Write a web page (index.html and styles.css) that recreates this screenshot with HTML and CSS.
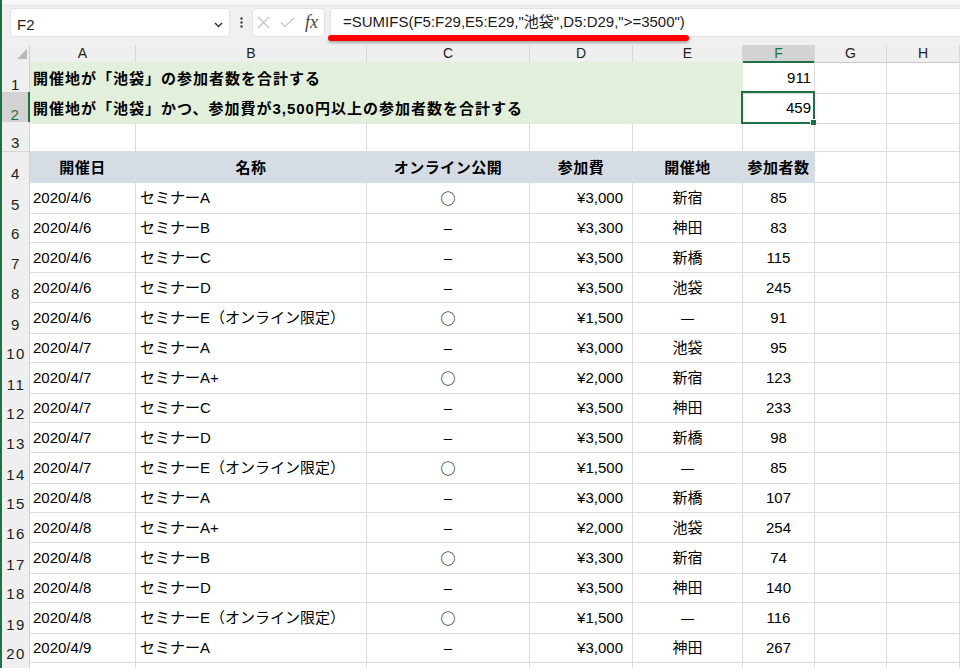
FILE: index.html
```html
<!DOCTYPE html>
<html lang="ja">
<head>
<meta charset="utf-8">
<title>SUMIFS</title>
<link rel="stylesheet" href="styles.css">
</head>
<body>
<div class="app">
  <div class="toolbar">
    <div class="namebox">
      <span class="name">F2</span>
      <svg class="chev" width="9" height="6" viewBox="0 0 9 6"><path d="M1 1l3.5 3.5L8 1" fill="none" stroke="#333" stroke-width="1.5"/></svg>
    </div>
    <div class="dots">
      <svg width="3" height="11" viewBox="0 0 3 11"><circle cx="1.5" cy="1.5" r="1.2" fill="#444"/><circle cx="1.5" cy="5.5" r="1.2" fill="#444"/><circle cx="1.5" cy="9.5" r="1.2" fill="#444"/></svg>
    </div>
    <div class="fxbox">
      <svg width="13" height="13" viewBox="0 0 13 13"><path d="M1 1L12 12M12 1L1 12" fill="none" stroke="#c2c2c2" stroke-width="1.2"/></svg>
      <svg width="15" height="11" viewBox="0 0 15 11"><path d="M1 5.5L5 9.5L14 1" fill="none" stroke="#c2c2c2" stroke-width="1.2"/></svg>
      <span class="fx">fx</span>
    </div>
    <div class="formula">
      <span class="ftext">=SUMIFS(F5:F29,E5:E29,"池袋",D5:D29,"&gt;=3500")</span>
      <div class="mark"></div>
    </div>
  </div>

  <div class="sheet">
    <div class="row hdr">
      <div class="corner"><svg width="10" height="10" viewBox="0 0 10 10"><polygon points="10,0 10,10 0,10" fill="#b9b9b9"/></svg></div>
      <div class="ch">A</div><div class="ch">B</div><div class="ch">C</div><div class="ch">D</div><div class="ch">E</div><div class="ch sel">F</div><div class="ch">G</div><div class="ch">H</div>
    </div>

    <div class="row">
      <div class="rh">1</div>
      <div class="c note">開催地が「池袋」の参加者数を合計する</div>
      <div class="c val">911</div><div class="c"></div><div class="c"></div>
    </div>
    <div class="row">
      <div class="rh sel">2</div>
      <div class="c note">開催地が「池袋」かつ、参加費が3,500円以上の参加者数を合計する</div>
      <div class="c val active">459</div><div class="c"></div><div class="c"></div>
    </div>
    <div class="row">
      <div class="rh">3</div>
      <div class="c"></div><div class="c"></div><div class="c"></div><div class="c"></div><div class="c"></div><div class="c"></div><div class="c"></div><div class="c"></div>
    </div>
    <div class="row">
      <div class="rh">4</div>
      <div class="c th">開催日</div><div class="c th">名称</div><div class="c th">オンライン公開</div><div class="c th">参加費</div><div class="c th">開催地</div><div class="c th">参加者数</div><div class="c"></div><div class="c"></div>
    </div>

    <div class="row"><div class="rh">5</div><div class="c a">2020/4/6</div><div class="c b">セミナーA</div><div class="c m"><span class="maru">○</span></div><div class="c d">¥3,000</div><div class="c e">新宿</div><div class="c n">85</div><div class="c"></div><div class="c"></div></div>
    <div class="row"><div class="rh">6</div><div class="c a">2020/4/6</div><div class="c b">セミナーB</div><div class="c m">–</div><div class="c d">¥3,300</div><div class="c e">神田</div><div class="c n">83</div><div class="c"></div><div class="c"></div></div>
    <div class="row"><div class="rh">7</div><div class="c a">2020/4/6</div><div class="c b">セミナーC</div><div class="c m">–</div><div class="c d">¥3,500</div><div class="c e">新橋</div><div class="c n">115</div><div class="c"></div><div class="c"></div></div>
    <div class="row"><div class="rh">8</div><div class="c a">2020/4/6</div><div class="c b">セミナーD</div><div class="c m">–</div><div class="c d">¥3,500</div><div class="c e">池袋</div><div class="c n">245</div><div class="c"></div><div class="c"></div></div>
    <div class="row"><div class="rh">9</div><div class="c a">2020/4/6</div><div class="c b">セミナーE（オンライン限定）</div><div class="c m"><span class="maru">○</span></div><div class="c d">¥1,500</div><div class="c e"><span class="bar">—</span></div><div class="c n">91</div><div class="c"></div><div class="c"></div></div>
    <div class="row"><div class="rh">10</div><div class="c a">2020/4/7</div><div class="c b">セミナーA</div><div class="c m">–</div><div class="c d">¥3,000</div><div class="c e">池袋</div><div class="c n">95</div><div class="c"></div><div class="c"></div></div>
    <div class="row"><div class="rh">11</div><div class="c a">2020/4/7</div><div class="c b">セミナーA+</div><div class="c m"><span class="maru">○</span></div><div class="c d">¥2,000</div><div class="c e">新宿</div><div class="c n">123</div><div class="c"></div><div class="c"></div></div>
    <div class="row"><div class="rh">12</div><div class="c a">2020/4/7</div><div class="c b">セミナーC</div><div class="c m">–</div><div class="c d">¥3,500</div><div class="c e">神田</div><div class="c n">233</div><div class="c"></div><div class="c"></div></div>
    <div class="row"><div class="rh">13</div><div class="c a">2020/4/7</div><div class="c b">セミナーD</div><div class="c m">–</div><div class="c d">¥3,500</div><div class="c e">新橋</div><div class="c n">98</div><div class="c"></div><div class="c"></div></div>
    <div class="row"><div class="rh">14</div><div class="c a">2020/4/7</div><div class="c b">セミナーE（オンライン限定）</div><div class="c m"><span class="maru">○</span></div><div class="c d">¥1,500</div><div class="c e"><span class="bar">—</span></div><div class="c n">85</div><div class="c"></div><div class="c"></div></div>
    <div class="row"><div class="rh">15</div><div class="c a">2020/4/8</div><div class="c b">セミナーA</div><div class="c m">–</div><div class="c d">¥3,000</div><div class="c e">新橋</div><div class="c n">107</div><div class="c"></div><div class="c"></div></div>
    <div class="row"><div class="rh">16</div><div class="c a">2020/4/8</div><div class="c b">セミナーA+</div><div class="c m">–</div><div class="c d">¥2,000</div><div class="c e">池袋</div><div class="c n">254</div><div class="c"></div><div class="c"></div></div>
    <div class="row"><div class="rh">17</div><div class="c a">2020/4/8</div><div class="c b">セミナーB</div><div class="c m"><span class="maru">○</span></div><div class="c d">¥3,300</div><div class="c e">新宿</div><div class="c n">74</div><div class="c"></div><div class="c"></div></div>
    <div class="row"><div class="rh">18</div><div class="c a">2020/4/8</div><div class="c b">セミナーD</div><div class="c m">–</div><div class="c d">¥3,500</div><div class="c e">神田</div><div class="c n">140</div><div class="c"></div><div class="c"></div></div>
    <div class="row"><div class="rh">19</div><div class="c a">2020/4/8</div><div class="c b">セミナーE（オンライン限定）</div><div class="c m"><span class="maru">○</span></div><div class="c d">¥1,500</div><div class="c e"><span class="bar">—</span></div><div class="c n">116</div><div class="c"></div><div class="c"></div></div>
    <div class="row"><div class="rh">20</div><div class="c a">2020/4/9</div><div class="c b">セミナーA</div><div class="c m">–</div><div class="c d">¥3,000</div><div class="c e">神田</div><div class="c n">267</div><div class="c"></div><div class="c"></div></div>
    <div class="row"><div class="rh"></div><div class="c a"></div><div class="c b"></div><div class="c m"></div><div class="c d"></div><div class="c e"></div><div class="c n"></div><div class="c"></div><div class="c"></div></div>
  </div>
</div>
</body>
</html>
```

FILE: styles.css
```css
* { box-sizing: border-box; }
html, body { margin: 0; padding: 0; }
body {
  width: 960px;
  height: 668px;
  overflow: hidden;
  background: #fff;
  color: #000;
  font-family: "Liberation Sans", "Noto Sans CJK JP", sans-serif;
  font-size: 15px;
}
.app {
  height: 668px;
  overflow: hidden;
  border-left: 2px solid #1e7145;
}

/* ---------- formula bar ---------- */
.toolbar {
  height: 45px;
  display: flex;
  align-items: flex-start;
  padding: 8px 0 0 8px;
  background: linear-gradient(#f9f9f9 0, #f9f9f9 4px, #e6e6e6 5px, #f0f0f0 7px, #f0f0f0 100%);
}
.namebox {
  width: 220px;
  height: 29px;
  background: #fff;
  border: 1px solid #e2e2e2;
  border-radius: 4px;
  display: flex;
  align-items: flex-start;
  justify-content: space-between;
  padding: 0 6px 0 6px;
}
.name { line-height: 20px; margin-top: 6px; color: #222; }
.chev { margin-top: 13px; }
.dots {
  width: 22px;
  height: 29px;
  display: flex;
  align-items: center;
  justify-content: center;
}
.fxbox {
  width: 73px;
  height: 29px;
  background: #fff;
  border: 1px solid #e2e2e2;
  border-radius: 4px;
  display: flex;
  align-items: center;
  gap: 10px;
  padding-left: 4px;
}
.fx {
  font-family: "Liberation Serif", "DejaVu Serif", serif;
  font-style: italic;
  font-size: 18px;
  color: #444;
  line-height: 1;
  margin-top: -2px;
}
.formula {
  position: relative;
  flex: 1;
  margin-left: 5px;
  margin-right: -4px;
  height: 29px;
  background: #fff;
  border: 1px solid #e2e2e2;
  border-radius: 4px;
  padding-left: 12px;
}
.ftext { line-height: 25px; white-space: nowrap; color: #1a1a1a; }
.mark {
  position: absolute;
  left: -3px;
  top: 26px;
  width: 361px;
  height: 6px;
  background: #ff0000;
  border-radius: 3px;
  box-shadow: 0 2px 3px rgba(0, 0, 0, 0.3);
}

/* ---------- sheet ---------- */
.sheet { display: flex; flex-direction: column; }
.row {
  display: grid;
  grid-template-columns: 28px 106px 231px 163px 103px 110px 72px 72px 73px;
  height: 30px;
  flex: none;
}
.row.hdr { height: 17px; }

.corner {
  background: #efefef;
  border-right: 1px solid #d0d0d0;
  border-bottom: 1px solid #c8c8c8;
  padding: 4px 0 0 15px;
}
.corner svg { display: block; }
.ch {
  background: #efefef;
  border-right: 1px solid #d6d6d6;
  border-bottom: 1px solid #c8c8c8;
  text-align: center;
  font-size: 14px;
  line-height: 15px;
  padding-top: 1px;
  color: #222;
}
.ch.sel {
  background: #d3d3d3;
  color: #1e7145;
  border-bottom: 2px solid #1e7145;
}
.rh {
  background: #efefef;
  border-right: 1px solid #d0d0d0;
  border-bottom: 1px solid #d6d6d6;
  display: flex;
  align-items: flex-end;
  justify-content: center;
  font-size: 15px;
  line-height: 1;
  letter-spacing: 1.5px;
  padding-left: 1px;
  padding-bottom: 1px;
  color: #222;
}
.rh.sel {
  background: #d3d3d3;
  color: #1e7145;
  border-right: 2px solid #1e7145;
}

.c {
  border-right: 1px solid #dcdcdc;
  border-bottom: 1px solid #dcdcdc;
  padding-top: 2px;
  line-height: 28px;
  white-space: nowrap;
}
.note {
  grid-column: span 5;
  background: #e2efda;
  border-color: #e2efda;
  font-weight: bold;
  letter-spacing: 1px;
  padding-left: 3px;
  padding-top: 3px;
}
.val { text-align: right; padding-right: 3px; }
.active { position: relative; }
.active::before {
  content: "";
  position: absolute;
  left: -2px;
  top: -1px;
  right: -1px;
  bottom: -1px;
  border: 2px solid #1e7145;
}
.active::after {
  content: "";
  position: absolute;
  right: -2px;
  bottom: -2px;
  width: 5px;
  height: 5px;
  background: #1e7145;
  box-shadow: -1px -1px 0 #fff;
}
.th {
  background: #d6dce4;
  border-color: #d6dce4;
  font-weight: bold;
  text-align: center;
  letter-spacing: 0.5px;
}
.a { padding-left: 3px; }
.b { padding-left: 4px; }
.m { text-align: center; }
.maru { font-family: "Noto Sans CJK JP", sans-serif; font-size: 15px; }
.d { text-align: right; padding-right: 9px; }
.e { text-align: center; }
.n { text-align: center; }
.bar { font-size: 13px; }
```
